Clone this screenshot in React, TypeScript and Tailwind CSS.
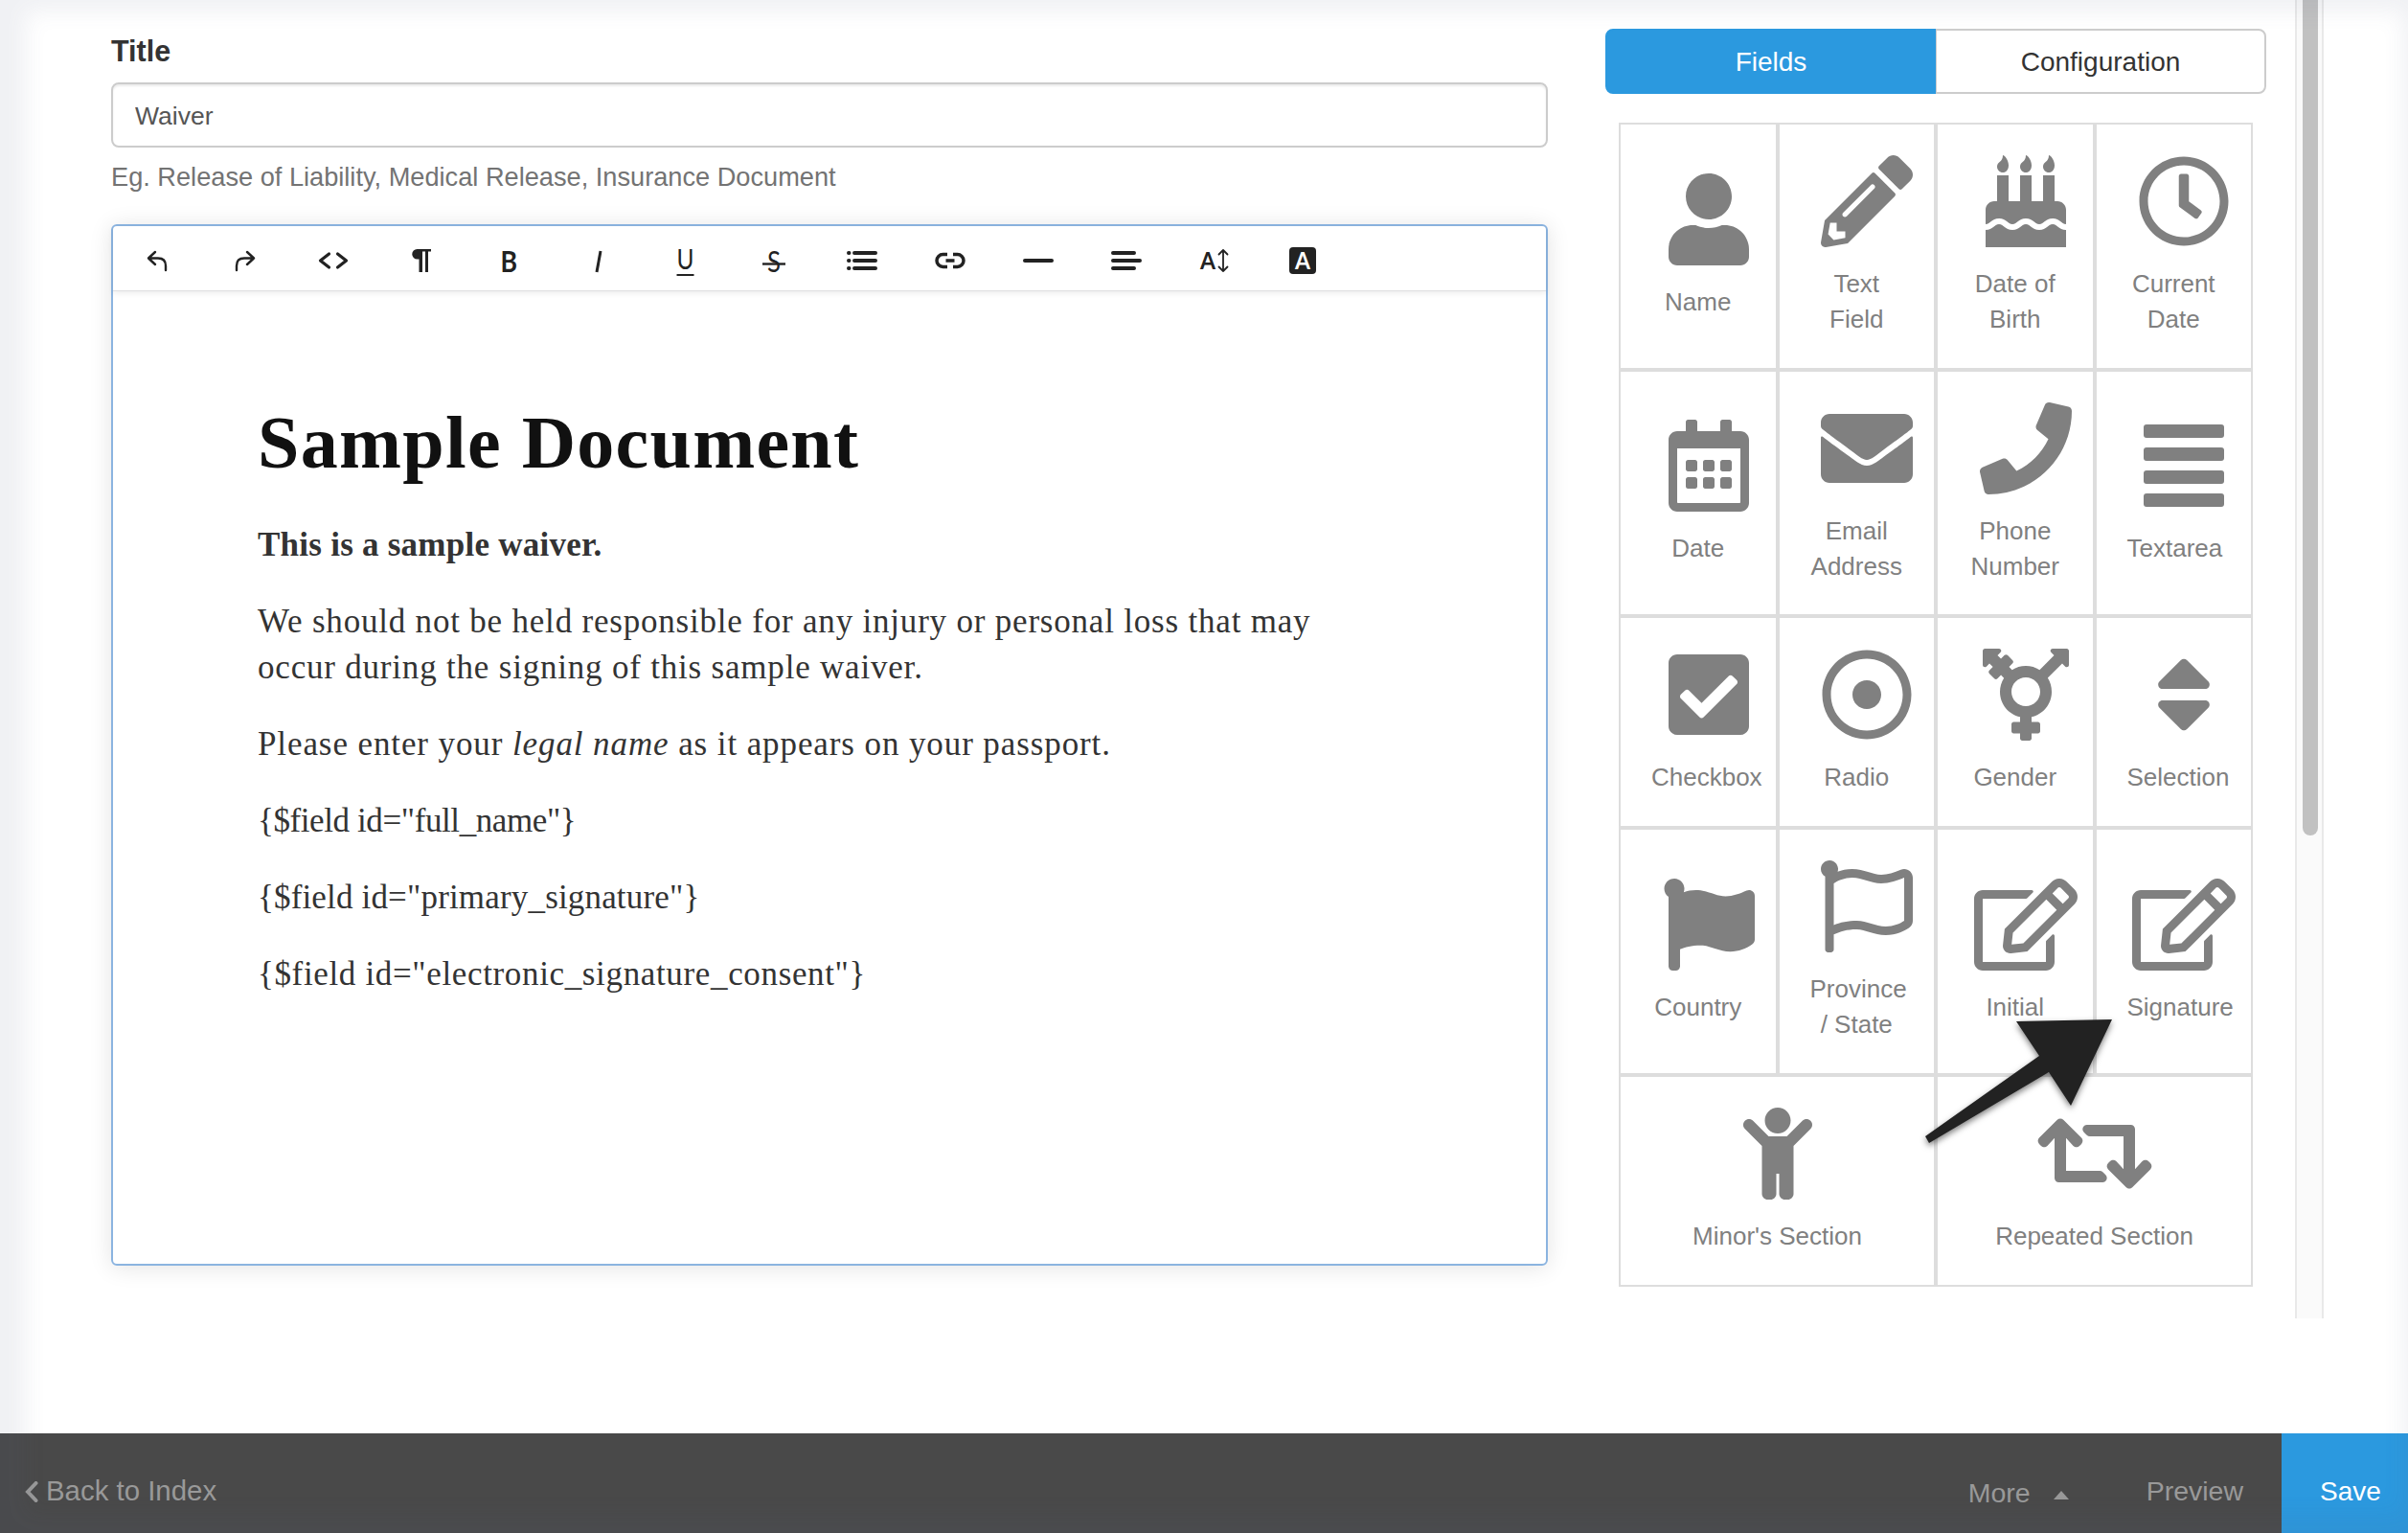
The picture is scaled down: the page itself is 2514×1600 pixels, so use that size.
import { useState, type ReactNode } from "react";
import type { IconType } from "react-icons";
import {
  FaBirthdayCake,
  FaCheckSquare,
  FaChild,
  FaEnvelope,
  FaFlag,
  FaPencilAlt,
  FaPhone,
  FaRegCalendarAlt,
  FaRegClock,
  FaRegDotCircle,
  FaRegEdit,
  FaRegFlag,
  FaRetweet,
  FaSort,
  FaTransgenderAlt,
  FaUser,
} from "react-icons/fa";

interface FieldType {
  label: string;
  icon: IconType;
  iconWidth?: string;
}

function TextareaIcon({ className }: { className?: string }) {
  return (
    <svg viewBox="0 0 448 512" fill="currentColor" className={className}>
      <rect y="27" width="448" height="74" rx="16" />
      <rect y="155" width="448" height="74" rx="16" />
      <rect y="283" width="448" height="74" rx="16" />
      <rect y="411" width="448" height="74" rx="16" />
    </svg>
  );
}

const FIELDS: FieldType[] = [
  { label: "Name", icon: FaUser },
  { label: "Text Field", icon: FaPencilAlt },
  { label: "Date of Birth", icon: FaBirthdayCake },
  { label: "Current Date", icon: FaRegClock },
  { label: "Date", icon: FaRegCalendarAlt },
  { label: "Email Address", icon: FaEnvelope },
  { label: "Phone Number", icon: FaPhone },
  { label: "Textarea", icon: TextareaIcon as IconType },
  { label: "Checkbox", icon: FaCheckSquare },
  { label: "Radio", icon: FaRegDotCircle },
  { label: "Gender", icon: FaTransgenderAlt },
  { label: "Selection", icon: FaSort },
  { label: "Country", icon: FaFlag },
  { label: "Province / State", icon: FaRegFlag },
  { label: "Initial", icon: FaRegEdit, iconWidth: "w-[108px]" },
  { label: "Signature", icon: FaRegEdit, iconWidth: "w-[108px]" },
];

const SECTIONS: FieldType[] = [
  { label: "Minor's Section", icon: FaChild },
  { label: "Repeated Section", icon: FaRetweet, iconWidth: "w-[120px]" },
];

const ICON_FONT = "Lato, sans-serif";

const TOOLS: { name: string; drawing: ReactNode }[] = [
  {
    name: "Undo",
    drawing: <path d="M14 7 7 13.5l7 6.5M7 13.5h10q8 0 8 8V26" strokeWidth="2.4" />,
  },
  {
    name: "Redo",
    drawing: <path d="m18 7 7 6.5-7 6.5M25 13.5H15q-8 0-8 8V26" strokeWidth="2.4" />,
  },
  {
    name: "HTML",
    drawing: <path d="m11.5 9-9 7 9 7M20.5 9l9 7-9 7" strokeWidth="3.2" />,
  },
  {
    name: "Formatting",
    drawing: (
      <path
        d="M11.5 4H26v2.5h-3V28h-3V6.500h-3V28h-3.500V14.500h-2a5.250 5.250 0 0 1 0-10.500z"
        fill="currentColor"
        stroke="none"
      />
    ),
  },
  {
    name: "Bold",
    drawing: (
      <text x="6.500" y="28" fontSize="30" fontWeight="700" textLength="17.500" lengthAdjust="spacingAndGlyphs">
        B
      </text>
    ),
  },
  { name: "Italic", drawing: <path d="M19 6 15 28" strokeWidth="3" strokeLinecap="butt" /> },
  {
    name: "Underline",
    drawing: (
      <>
        <text x="6.500" y="25" fontSize="28" textLength="18" lengthAdjust="spacingAndGlyphs">
          U
        </text>
        <path d="M6.500 31h18" strokeWidth="2" strokeLinecap="butt" />
      </>
    ),
  },
  {
    name: "Strikethrough",
    drawing: (
      <>
        <text x="9" y="28" fontSize="31" textLength="14" lengthAdjust="spacingAndGlyphs">
          S
        </text>
        <path d="M4 19.500h24" strokeWidth="2.400" strokeLinecap="butt" />
      </>
    ),
  },
  {
    name: "Lists",
    drawing: <path d="M2 8h.5M2 16h.5M2 24h.5M8 8h22M8 16h22M8 24h22" strokeWidth="4" />,
  },
  {
    name: "Link",
    drawing: (
      <path
        d="M13 9.500H8.500a6.500 6.500 0 0 0 0 13H13M19 9.500h4.500a6.500 6.500 0 0 1 0 13H19M11.500 16h9"
        strokeWidth="3.500"
        strokeLinecap="butt"
      />
    ),
  },
  { name: "Line", drawing: <path d="M2 16h28" strokeWidth="4" /> },
  { name: "Alignment", drawing: <path d="M2 8h22M2 16h28M2 24h22" strokeWidth="4" /> },
  {
    name: "Font size",
    drawing: (
      <>
        <text x="1" y="25" fontSize="25" fontWeight="700" textLength="16" lengthAdjust="spacingAndGlyphs">
          A
        </text>
        <path d="M25 5v22M20.500 9.500 25 5l4.500 4.500M20.500 22.500 25 27l4.500-4.500" strokeWidth="1.800" />
      </>
    ),
  },
  {
    name: "Text color",
    drawing: (
      <>
        <rect x="2" y="2" width="28" height="28" rx="4" fill="currentColor" stroke="none" />
        <text x="8" y="25" fontSize="25" fontWeight="700" textLength="16" lengthAdjust="spacingAndGlyphs">
          A
        </text>
      </>
    ),
  },
];

function ToolButton({ name, children }: { name: string; children: ReactNode }) {
  return (
    <button type="button" aria-label={name} className="flex h-full w-[92px] items-center justify-center">
      <svg
        width="32"
        height="32"
        viewBox="0 0 32 32"
        fill="none"
        stroke="currentColor"
        strokeLinecap="round"
        strokeLinejoin="round"
        fontFamily={ICON_FONT}
        className="overflow-visible [&_text]:fill-current [&_text]:stroke-none [&_rect+text]:fill-white"
      >
        {children}
      </svg>
    </button>
  );
}

function FieldTile({ label, icon: Icon, iconWidth = "w-24" }: FieldType) {
  return (
    <div className="flex flex-col justify-center border-2 border-[#ddd] px-8 text-center">
      {/* icon box is wider than the label column and spills to the right */}
      <span className="flex w-[119px] justify-center">
        <Icon className={`h-24 shrink-0 ${iconWidth}`} />
      </span>
      <span className="mt-5">{label}</span>
    </div>
  );
}

function SectionTile({ label, icon: Icon, iconWidth = "w-24" }: FieldType) {
  return (
    <div className="flex flex-col items-center justify-center border-2 border-[#ddd]">
      <Icon className={`h-24 ${iconWidth}`} />
      <span className="mt-5">{label}</span>
    </div>
  );
}

function Editor() {
  return (
    <div className="mt-[31px] flex h-[1087px] flex-col rounded-md border-2 border-[#8bb4e0] shadow-[0_2px_24px_rgba(0,0,0,0.11)]">
      <div className="flex h-[68px] shrink-0 items-center border-b border-[#dfdfe1] pt-1 text-[#222] shadow-[0_2px_6px_rgba(0,0,0,0.08)]">
        {TOOLS.map((tool) => (
          <ToolButton key={tool.name} name={tool.name}>
            {tool.drawing}
          </ToolButton>
        ))}
      </div>
      <div className="px-[151px] pt-[108px] font-['Liberation_Serif',serif] text-[35px] leading-[48px] text-[#333]">
        <h1 className="mb-[33px] text-[78px] leading-[100px] font-bold tracking-[1.3px] whitespace-nowrap text-[#111]">
          Sample Document
        </h1>
        <p className="mb-8 font-bold tracking-[0.25px]">This is a sample waiver.</p>
        <p className="mb-8 tracking-[0.8px] whitespace-nowrap">
          We should not be held responsible for any injury or personal loss that may
          <br />
          occur during the signing of this sample waiver.
        </p>
        <p className="mb-8 tracking-[0.9px]">
          Please enter your <em>legal name</em> as it appears on your passport.
        </p>
        <p className="mb-8 tracking-[-0.4px]">{'{$field id="full_name"}'}</p>
        <p className="mb-8 tracking-[0.17px]">{'{$field id="primary_signature"}'}</p>
        <p className="tracking-[0.65px]">{'{$field id="electronic_signature_consent"}'}</p>
      </div>
    </div>
  );
}

function Footer() {
  return (
    <footer className="flex h-[104px] shrink-0 items-stretch bg-[#494949] text-[28.5px] text-[#999]">
      <a className="flex items-center pt-[17px] pl-[26px] text-[29.4px]">
        <svg width="14" height="22" viewBox="0 0 14 22" fill="none" stroke="currentColor" strokeWidth="4">
          <path d="M11.500 2 3 11l8.500 9" strokeLinecap="round" />
        </svg>
        <span className="ml-2">Back to Index</span>
      </a>
      <div className="ml-auto flex items-center pt-[17px]">
        <a className="mt-1 flex items-center">
          More
          <svg width="16" height="9" viewBox="0 0 16 9" className="mt-[3px] ml-[24px]">
            <path d="M0 9 8 0l8 9z" fill="currentColor" />
          </svg>
        </a>
        <a className="ml-[81px]">Preview</a>
      </div>
      <button type="button" className="ml-10 w-[132px] bg-[#2b99df] pt-[17px] pl-3 text-[28px] text-white">
        Save
      </button>
    </footer>
  );
}

export default function App() {
  const [tab, setTab] = useState("fields");
  const [title, setTitle] = useState("Waiver");

  const active = "bg-[#2b99df] text-white border-[#2b99df]";
  const inactive = "bg-white text-[#333] border-[#ccc]";

  return (
    <div className="relative flex h-[1600px] w-[2514px] flex-col overflow-hidden bg-white font-['Liberation_Sans',Arial,sans-serif]">
      <main className="flex flex-1 pl-[116px]">
        <section className="w-[1500px] pt-8">
          <label className="block text-[30.5px] leading-[42px] font-bold text-[#333]">Title</label>
          <input
            value={title}
            onChange={(e) => setTitle(e.target.value)}
            className="mt-3 block h-[68px] w-full rounded-lg border-2 border-[#ccc] px-[23px] pt-[2px] text-[26.5px] text-[#555] shadow-[inset_0_2px_2px_rgba(0,0,0,0.075)] outline-none"
          />
          <p className="mt-3 text-[27.2px] leading-[37px] text-[#737373]">
            Eg. Release of Liability, Medical Release, Insurance Document
          </p>
          <Editor />
        </section>

        <aside className="ml-[60px] w-[690px] pt-[30px]">
          <div className="flex h-[68px] text-[28px]">
            <button
              type="button"
              onClick={() => setTab("fields")}
              className={`w-[346px] rounded-l-lg border-2 pt-px ${tab === "fields" ? active : inactive}`}
            >
              Fields
            </button>
            <button
              type="button"
              onClick={() => setTab("configuration")}
              className={`-ml-px w-[345px] rounded-r-lg border-2 border-l pt-px ${tab === "configuration" ? active : inactive}`}
            >
              Configuration
            </button>
          </div>
          <div className="mt-[30px] ml-[14px] w-[662px] text-[26px] leading-[37px] text-[#808080]">
            <div className="grid grid-cols-4 grid-rows-[258px_257px_221px_258px]">
              {FIELDS.map((field) => (
                <FieldTile key={field.label} {...field} />
              ))}
            </div>
            <div className="grid h-[221px] grid-cols-2">
              {SECTIONS.map((section) => (
                <SectionTile key={section.label} {...section} />
              ))}
            </div>
          </div>
        </aside>

        <div className="ml-[30px] flex h-[1376px] w-[30px] justify-center border-x-2 border-[#e9e9e9] bg-[#fafafa] pl-[2px]">
          <div className="h-[872px] w-4 rounded-b-full bg-[#c1c1c1]" />
        </div>
      </main>

      <Footer />

      {/* pointer to the Signature field */}
      <svg
        width="200"
        height="136"
        viewBox="0 0 200 136"
        className="absolute top-[1062px] left-[2008px] overflow-visible drop-shadow-[0_3px_3px_rgba(0,0,0,0.5)]"
      >
        <path d="M2 124 121 40 97 4 197 2 154 92 131 57 6 131z" fill="#222" />
      </svg>

      {/* soft shade round the page edge */}
      <div className="pointer-events-none absolute inset-0 shadow-[inset_11px_-4px_22px_16px_rgba(90,100,130,0.09)]" />
    </div>
  );
}
